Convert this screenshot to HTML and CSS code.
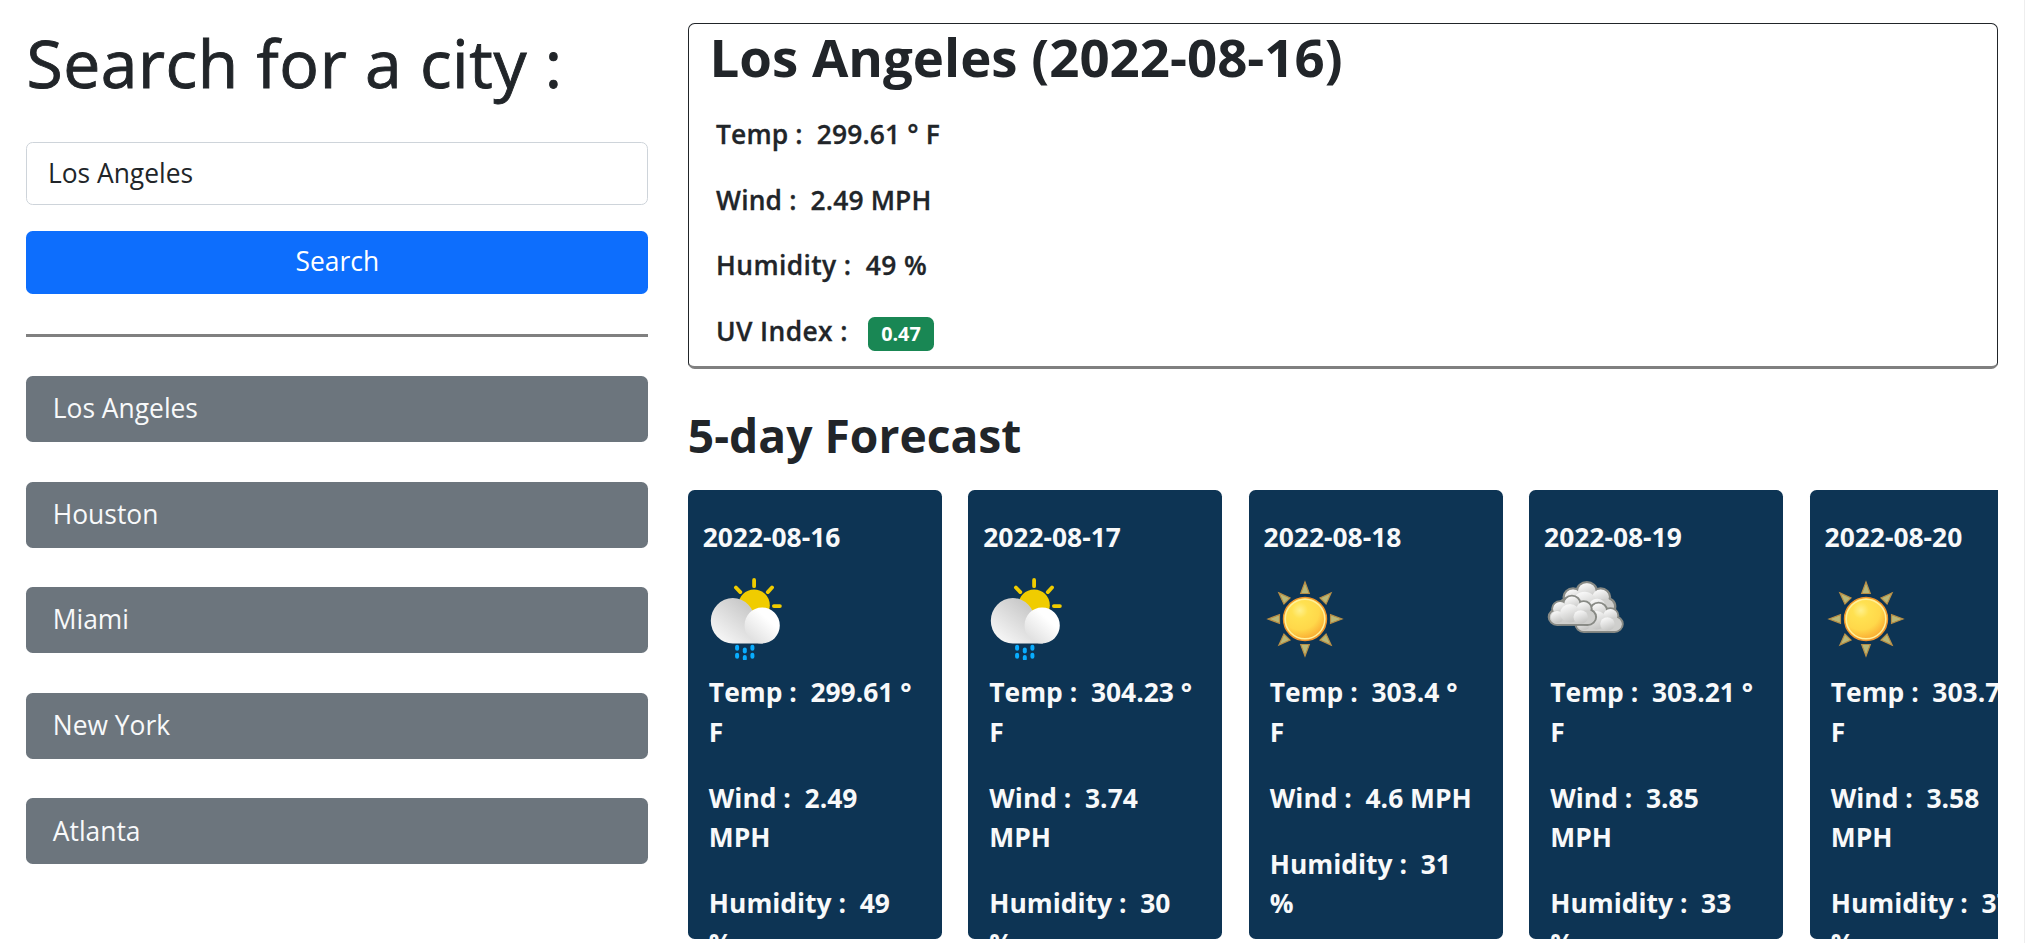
FILE: index.html
```html
<!DOCTYPE html>
<html lang="en">
<head>
<meta charset="utf-8">
<title>Weather Dashboard</title>
<link rel="stylesheet" href="styles.css">
</head>
<body>
<svg class="defs" width="0" height="0" aria-hidden="true">
  <defs>
    <linearGradient id="cloudBack" x1=".75" y1=".1" x2=".1" y2=".8"><stop offset=".1" stop-color="#cacaca"/><stop offset="1" stop-color="#f4f4f4"/></linearGradient>
    <linearGradient id="cloudFront" x1=".8" y1=".1" x2=".1" y2=".9"><stop offset=".25" stop-color="#fff"/><stop offset="1" stop-color="#dedede"/></linearGradient>
    <radialGradient id="sunFill" cx=".38" cy=".3" r=".75"><stop offset="0" stop-color="#fff08a"/><stop offset=".25" stop-color="#ffe151"/><stop offset=".6" stop-color="#ffd84a"/><stop offset="1" stop-color="#f9a02c"/></radialGradient>
    <linearGradient id="puff" x1=".3" y1="0" x2=".7" y2="1"><stop offset="0" stop-color="#fbfbfb"/><stop offset="1" stop-color="#c2c2c0"/></linearGradient>
    <g id="cloudUnit">
      <g fill="#d8d8d6" stroke="#888a85" stroke-width="2.4">
        <circle cx="10" cy="29" r="8.500"/><circle cx="13" cy="20" r="8"/><circle cx="25" cy="14.500" r="8.500"/><circle cx="37" cy="20" r="8"/><circle cx="41" cy="29" r="8.500"/>
      </g>
      <path d="M10 37.500H41" stroke="#888a85" stroke-width="2.400"/>
      <circle cx="13" cy="20" r="7.200" fill="url(#puff)"/><circle cx="25" cy="14.500" r="7.700" fill="url(#puff)"/><circle cx="37" cy="20" r="7.200" fill="url(#puff)"/>
      <rect x="2.600" y="22" width="46" height="14.500" rx="7.200" fill="#cfcfcd"/>
      <circle cx="10" cy="29" r="6.500" fill="url(#puff)"/><circle cx="23" cy="25" r="10" fill="url(#puff)"/><circle cx="34" cy="29" r="7.400" fill="url(#puff)"/>
    </g>
    <symbol id="rain" viewBox="2.9 7.3 82 82">
      <g stroke="#f0cc00" stroke-width="3.800" stroke-linecap="round"><path d="M54 9.300v6.200M35.800 16.800l4.400 4.600M71.900 16.800l-4.200 4.600M73.800 35.400h6"/></g>
      <circle cx="54" cy="34.500" r="15.700" fill="#f0cc00"/>
      <path d="M32.700 27.300a22 22.700 0 0 0 0 45.400h30V50H54.700a22 22.700 0 0 0-22-22.700z" fill="url(#cloudBack)"/>
      <path d="M62 36.700a17.700 18 0 0 1 0 36c-10 0-17.500-8-17.500-18s7.500-18 17.500-18z" fill="url(#cloudFront)"/>
      <g fill="#09adff"><rect x="35" y="74" width="4" height="6" rx="2"/><rect x="35" y="82" width="4" height="6" rx="2"/><rect x="42.700" y="76.700" width="4" height="6" rx="2"/><rect x="42.700" y="84.300" width="4" height="5.800" rx="2"/><rect x="50.300" y="74" width="4" height="6" rx="2"/><rect x="50.300" y="82" width="4" height="6" rx="2"/></g>
    </symbol>
    <symbol id="sun" viewBox="-41 -41 82 82">
      <g fill="#b9b878" stroke="#b98f45" stroke-width="1.200">
        <path id="ray" d="M0-37L4.300-25.500H-4.300z"/>
        <use href="#ray" transform="rotate(45)"/><use href="#ray" transform="rotate(90)"/><use href="#ray" transform="rotate(135)"/><use href="#ray" transform="rotate(180)"/><use href="#ray" transform="rotate(225)"/><use href="#ray" transform="rotate(270)"/><use href="#ray" transform="rotate(315)"/>
      </g>
      <circle r="21.500" fill="url(#sunFill)" stroke="#f0932b" stroke-width="1.400"/>
      <circle r="19.800" fill="none" stroke="#fff09a" stroke-width="1.500"/>
    </symbol>
    <symbol id="clouds" viewBox="9.1 8.3 82 82">
      <use href="#cloudUnit" transform="translate(23.2 6.3) scale(1.150 1.050)"/>
      <use href="#cloudUnit" transform="translate(39.200 27.600) scale(.980 .920)"/>
      <use href="#cloudUnit" transform="translate(12.500 20.600) scale(.980 .920)"/>
    </symbol>
  </defs>
</svg>
<main class="page">
  <aside class="search">
    <h1 class="search-title">Search for a city :</h1>
    <input class="search-input" type="text" value="Los Angeles">
    <button class="search-button">Search</button>
    <hr class="divider">
    <ul class="history">
      <li class="history-item">Los Angeles</li>
      <li class="history-item">Houston</li>
      <li class="history-item">Miami</li>
      <li class="history-item">New York</li>
      <li class="history-item">Atlanta</li>
    </ul>
  </aside>
  <section class="weather">
    <div class="current">
      <h2 class="current-title">Los Angeles (2022-08-16)</h2>
      <p class="stat">Temp :&nbsp; 299.61 ° F</p>
      <p class="stat">Wind :&nbsp; 2.49 MPH</p>
      <p class="stat stat-loose">Humidity :&nbsp; 49 %</p>
      <p class="stat stat-loose">UV Index :&nbsp; <span class="badge">0.47</span></p>
    </div>
    <h3 class="forecast-title">5-day Forecast</h3>
    <div class="forecast">
      <article class="day">
        <h4 class="day-date">2022-08-16</h4>
        <svg class="day-icon"><use href="#rain"/></svg>
        <p class="day-stat">Temp :&nbsp; 299.61 ° F</p><p class="day-stat">Wind :&nbsp; 2.49 MPH</p><p class="day-stat">Humidity :&nbsp; 49 %</p>
      </article>
      <article class="day">
        <h4 class="day-date">2022-08-17</h4>
        <svg class="day-icon"><use href="#rain"/></svg>
        <p class="day-stat">Temp :&nbsp; 304.23 ° F</p><p class="day-stat">Wind :&nbsp; 3.74 MPH</p><p class="day-stat">Humidity :&nbsp; 30 %</p>
      </article>
      <article class="day">
        <h4 class="day-date">2022-08-18</h4>
        <svg class="day-icon"><use href="#sun"/></svg>
        <p class="day-stat">Temp :&nbsp; 303.4 ° F</p><p class="day-stat">Wind :&nbsp; 4.6 MPH</p><p class="day-stat">Humidity :&nbsp; 31 %</p>
      </article>
      <article class="day">
        <h4 class="day-date">2022-08-19</h4>
        <svg class="day-icon"><use href="#clouds"/></svg>
        <p class="day-stat">Temp :&nbsp; 303.21 ° F</p><p class="day-stat">Wind :&nbsp; 3.85 MPH</p><p class="day-stat">Humidity :&nbsp; 33 %</p>
      </article>
      <article class="day">
        <h4 class="day-date">2022-08-20</h4>
        <svg class="day-icon"><use href="#sun"/></svg>
        <p class="day-stat">Temp :&nbsp; 303.71 ° F</p><p class="day-stat">Wind :&nbsp; 3.58 MPH</p><p class="day-stat">Humidity :&nbsp; 37 %</p>
      </article>
    </div>
  </section>
</main>
</body>
</html>
```
FILE: styles.css
```css
*, *::before, *::after { box-sizing: border-box; }
html { font-size: 26.4px; }
body {
  margin: 0;
  height: 943px;
  overflow: hidden;
  border-right: 1px solid #eee;
  background: #fff;
  color: #212529;
  font-family: "Open Sans", "Noto Sans", sans-serif;
  font-size: 1rem;
  line-height: 1.5;
}
h1, h2, h3, h4, p, ul { margin: 0; }
.defs { display: block; }
.page { display: grid; grid-template-columns: 1fr 2fr; }
.search { display: flex; flex-direction: column; padding: 23px 26.4px 0; }
.search-title {
  font-size: 2.5rem;
  font-weight: 500;
  line-height: 1.2;
  letter-spacing: .58px;
  -webkit-text-stroke: .9px currentColor;
}
.search-input {
  height: 63px;
  margin-top: 39.8px;
  padding: 0 20.5px 1px;
  border: 1px solid #ced4da;
  border-radius: .25rem;
  color: inherit;
  font: inherit;
}
.search-button {
  height: 63px;
  margin-top: 26px;
  padding: 0 0 1px;
  border: 0;
  border-radius: .25rem;
  background: #0d6efd;
  color: #fff;
  font: inherit;
}
.divider { width: 100%; height: 3px; margin: 40px 0 39px; border: 0; background: #808080; }
.history { display: flex; flex-direction: column; gap: 1.5rem; padding: 0; list-style: none; }
.history-item {
  height: 66px;
  padding: 13.2px 26.4px;
  border-radius: .25rem;
  background: #6c757d;
  color: #f8f9fa;
}
.weather { min-width: 0; padding: 23px 26.4px 0 13.2px; }
.current {
  height: 346px;
  padding: 1px 20.6px 0;
  border: 1px solid #212529;
  border-bottom: 3px solid #808080;
  border-radius: .25rem;
}
.current-title { margin-bottom: 27px; font-size: 2rem; font-weight: 700; line-height: 1.2; }
.stat { margin: 0 0 25.9px 6.6px; font-weight: 600; letter-spacing: .15px; -webkit-text-stroke: .3px currentColor; }
.stat-loose { letter-spacing: .38px; }
.badge {
  display: inline-block;
  padding: .35em .65em;
  margin-left: 6px;
  border-radius: .25rem;
  background: #198754;
  color: #fff;
  font-size: .75em;
  font-weight: 700;
  line-height: 1;
  letter-spacing: 0;
  -webkit-text-stroke: 0;
  vertical-align: baseline;
}
.forecast-title { margin: 39px 0 27px; font-size: 1.75rem; font-weight: 700; line-height: 1.2; }
.forecast { display: flex; gap: 1rem; overflow: hidden; }
.day {
  flex: 0 0 254.1px;
  height: 449px;
  padding-top: 27.2px;
  overflow: hidden;
  border-radius: .25rem;
  background: #0d3454;
  color: #f8f9fa;
  font-weight: 700;
}
.day-date { padding-left: 14.8px; font-size: 1rem; font-weight: 700; }
.day-icon { display: block; width: 82px; height: 82px; margin: 20.5px 0 13.5px 15px; }
.day-stat { margin-bottom: 1rem; padding: 0 28px 0 21px; }
```
